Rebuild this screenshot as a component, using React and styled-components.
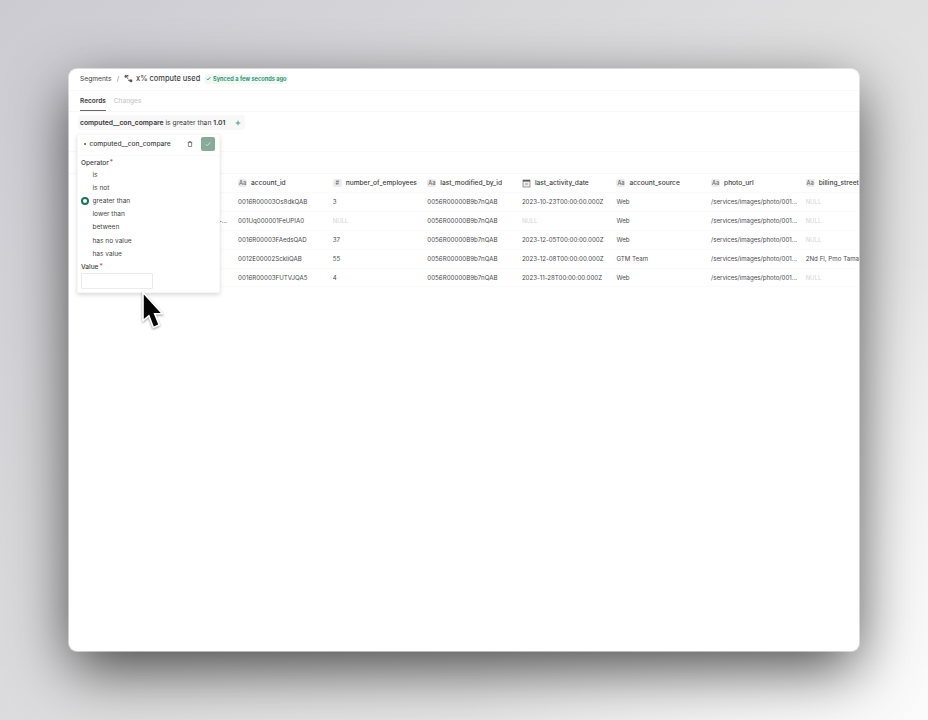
import React from "react";
import styled, { createGlobalStyle } from "styled-components";

const Global = createGlobalStyle`
  * { box-sizing: border-box; }
  body { margin: 0; font-family: Inter, "Liberation Sans", sans-serif; color: #3f3f42; }
`;

const Desktop = styled.main`
  position: relative;
  width: 928px;
  height: 720px;
  overflow: hidden;
  padding: 68px;
  background:
    radial-gradient(ellipse 460px 460px at 100% 100%, #fbfbfb 0%, rgba(251, 251, 251, 0) 100%),
    linear-gradient(135deg, #cccbd2 0%, #dededf 50%, #f0f0f1 100%);
`;

const Window = styled.section`
  position: relative;
  display: flex;
  flex-direction: column;
  width: 792px;
  height: 584px;
  border: 1px solid rgba(255, 255, 255, 0.5);
  border-radius: 9px;
  background: #fff;
  background-clip: padding-box;
  box-shadow: 0 19px 60px -3px rgba(0, 0, 0, 0.7);
`;

const Header = styled.header`
  display: flex;
  align-items: center;
  height: 22px;
  padding: 0 0 2px 11px;
  border-bottom: 1px solid #f8f8f8;
  font-size: 6.65px;
  line-height: 10px;
`;

const Crumb = styled.span`
  width: 32px;
`;
const Slash = styled.span`
  width: 12px;
  text-align: center;
  color: #777;
`;
const Title = styled.h1`
  margin: 0 5px 0 3px;
  width: 64px;
  font-size: 7.45px;
  font-weight: 500;
  white-space: nowrap;
`;
const Synced = styled.span`
  display: flex;
  align-items: center;
  gap: 2px;
  height: 10px;
  width: 83px;
  padding: 0 1px;
  border-radius: 2px;
  background: #effaf5;
  color: #2d8568;
  font-size: 5.7px;
  font-weight: 600;
  white-space: nowrap;
  svg { flex: none; }
`;

const Tabs = styled.nav`
  display: flex;
  gap: 8px;
  height: 21px;
  padding-left: 11px;
  border-bottom: 1px solid #f7f7f7;
`;
const Tab = styled.span`
  height: 20px;
  padding-top: 5px;
  border-bottom: 1px solid ${(p) => (p.$active ? "#666" : "transparent")};
  color: ${(p) => (p.$active ? "#3b3b3e" : "#c9c9ca")};
  font-size: 6.5px;
  font-weight: ${(p) => (p.$active ? 600 : 500)};
  line-height: 10px;
`;

const FilterBar = styled.div`
  height: 40px;
  padding: 3px 0 0 9px;
  border-bottom: 1px solid #f8f8f8;
`;
const Chip = styled.div`
  display: flex;
  align-items: center;
  width: 167px;
  height: 15px;
  padding-left: 2px;
  border-radius: 3px;
  background: #f8f8f8;
  font-size: 6.75px;
  white-space: pre;
  b { font-weight: 600; color: #353538; }
`;
const ChipText = styled.span`
  width: 155px;
`;

const Toolbar = styled.div`
  height: 21px;
`;

const Table = styled.div`
  overflow: hidden;
  padding-left: 74.5px;
  border-top: 1px solid #f7f7f7;
`;
const Row = styled.div`
  display: grid;
  grid-template-columns: 94.6px repeat(7, 94.6px);
  align-items: center;
  height: ${(p) => (p.$head ? "19px" : "18.9px")};
  border-bottom: 1px solid #fafafa;
`;
const HeadCell = styled.div`
  display: flex;
  align-items: center;
  gap: 4px;
  font-size: 6.62px;
  font-weight: 500;
  white-space: nowrap;
`;
const TypeBadge = styled.span`
  display: grid;
  place-items: center;
  width: 9px;
  height: 8px;
  border-radius: 2px;
  background: #ececec;
  color: #666;
  font-size: 5.6px;
`;
const Cell = styled.div`
  color: ${(p) => (p.$empty ? "#d4d4d4" : "#4a4a4d")};
  font-size: ${(p) => (p.$empty ? "5.9px" : "6.15px")};
  letter-spacing: ${(p) => p.$track || "0"};
  white-space: nowrap;
`;
const LeadCell = styled(Cell)`
  padding-right: 11px;
  text-align: right;
`;

const Panel = styled.aside`
  position: absolute;
  top: 65px;
  left: 8px;
  width: 143px;
  height: 159px;
  border: 1px solid #f7f7f7;
  border-radius: 2px;
  background: #fff;
  box-shadow: 0 2px 4px rgba(0, 0, 0, 0.15);
  font-size: 6.55px;
`;
const PanelHead = styled.div`
  display: flex;
  align-items: center;
  height: 21px;
  padding: 0 4px 3px 6px;
  border-bottom: 1px solid #fafafa;
`;
const Dot = styled.i`
  width: 2px;
  height: 2px;
  border-radius: 50%;
  background: #555;
`;
const FieldName = styled.span`
  width: 97px;
  margin-left: 3.5px;
  font-size: 6.65px;
  font-weight: 500;
`;
const Confirm = styled.button`
  display: grid;
  place-items: center;
  width: 14px;
  height: 14px;
  margin: 0 0 0 auto;
  padding: 0;
  border: 0;
  border-radius: 2px;
  background: #88aa9d;
`;
const PanelBody = styled.div`
  padding: 1px 3px 0;
`;
const Label = styled.div`
  height: 12px;
  font-weight: 500;
  line-height: 12px;
  sup { position: relative; top: -1px; margin-left: 1px; color: #dc3e5a; font-size: 6.5px; line-height: 0; vertical-align: baseline; }
`;
const Operators = styled.div`
  display: flex;
  flex-direction: column;
  margin: -1px 0 1px;
`;
const Option = styled.label`
  display: flex;
  align-items: center;
  gap: 3.5px;
  height: 13.2px;
`;
const Radio = styled.i`
  width: 8px;
  height: 8px;
  border: ${(p) => (p.$on ? "2.6px solid #1f7357" : "0")};
  border-radius: 50%;
`;
const ValueInput = styled.input`
  display: block;
  width: 72px;
  height: 16px;
  margin: 0 0 0 -0.5px;
  border: 1px solid #ebebeb;
  border-radius: 1px;
  outline: 0;
`;

const Cursor = styled.svg`
  position: absolute;
  left: 140px;
  top: 289px;
  filter: drop-shadow(0 1px 1px rgba(0, 0, 0, 0.4));
`;

const Check = ({ size, color, weight = 2 }) => (
  <svg width={size} height={size} viewBox="0 0 12 12" fill="none" stroke={color} strokeWidth={weight}>
    <path d="M1.5 6.5 4.5 9.5 10.5 2.5" />
  </svg>
);

const columns = [
  ["text", "account_id"],
  ["number", "number_of_employees"],
  ["text", "last_modified_by_id"],
  ["date", "last_activity_date"],
  ["text", "account_source"],
  ["text", "photo_url"],
  ["text", "billing_street"],
];

const user = "0056R00000B9b7nQAB";
const photo = "/services/images/photo/001…";
const rows = [
  ["", "0016R00003Os8dkQAB", "3", user, "2023-10-23T00:00:00.000Z", "Web", photo, "NULL"],
  ["-…", "001Uq000001FeUPIA0", "NULL", user, "NULL", "Web", photo, "NULL"],
  ["", "0016R00003FAedsQAD", "37", user, "2023-12-05T00:00:00.000Z", "Web", photo, "NULL"],
  ["", "0012E00002SckliQAB", "55", user, "2023-12-08T00:00:00.000Z", "GTM Team", photo, "2Nd Fl, Pmo Taman"],
  ["", "0016R00003FUTVJQA5", "4", user, "2023-11-28T00:00:00.000Z", "Web", photo, "NULL"],
];
const operators = ["is", "is not", "greater than", "lower than", "between", "has no value", "has value"];
const tracking = ["0", "0.02px", "0", "0.03px", "-0.02px", "0", "-0.02px", "0.03px"];

function TypeIcon({ type }) {
  if (type === "date") {
    return (
      <svg width="9" height="9" viewBox="0 0 9 9" fill="none" stroke="#88888b" strokeWidth="0.8">
        <rect x="1" y="1" width="7" height="7" fill="#ededed" />
        <path d="M1 1.8h7" stroke="#555" strokeWidth="1.5" />
        <path d="M3 5h3" />
      </svg>
    );
  }
  return <TypeBadge>{type === "number" ? "#" : "Aa"}</TypeBadge>;
}

export default function App() {
  return (
    <Desktop>
      <Global />
      <Window>
        <Header>
          <Crumb>Segments</Crumb>
          <Slash>/</Slash>
          <svg width="9" height="9" viewBox="0 0 9 9" fill="#59595c">
            <circle cx="1.8" cy="2.4" r="1.3" />
            <rect x="2.9" y="0.9" width="1.6" height="1.6" rx="0.5" />
            <rect x="3" y="3.5" width="1.3" height="1.2" rx="0.4" />
            <rect x="4.3" y="5.6" width="1.5" height="1.5" rx="0.5" />
            <circle cx="6.9" cy="6.7" r="1.5" />
          </svg>
          <Title>x% compute used</Title>
          <Synced>
            <Check size={5} color="#2d8568" />
            Synced a few seconds ago
          </Synced>
        </Header>
        <Tabs>
          <Tab $active>Records</Tab>
          <Tab>Changes</Tab>
        </Tabs>
        <FilterBar>
          <Chip>
            <ChipText><b>computed__con_compare</b> is greater than <b>1.01</b></ChipText>
            <svg width="6" height="6" viewBox="0 0 6 6" stroke="#48a287" strokeWidth="1">
              <path d="M3 .7v4.6M.7 3h4.6" />
            </svg>
          </Chip>
        </FilterBar>
        <Toolbar />
        <Table>
          <Row $head>
            <span />
            {columns.map(([type, name]) => (
              <HeadCell key={name}><TypeIcon type={type} />{name}</HeadCell>
            ))}
          </Row>
          {rows.map(([lead, ...cells], r) => (
            <Row key={r}>
              <LeadCell>{lead}</LeadCell>
              {cells.map((text, c) => (
                <Cell key={c} $empty={text === "NULL"} $track={tracking[c + 1]}>{text}</Cell>
              ))}
            </Row>
          ))}
        </Table>
        <Panel>
          <PanelHead>
            <Dot />
            <FieldName>computed__con_compare</FieldName>
            <svg width="6" height="6" viewBox="0 0 6 7" fill="none" stroke="#555" strokeWidth="0.8">
              <path d="M.4 1.7h5.2M2 1.5V.6h2v.9M1.1 1.8v4.6h3.8V1.8" />
            </svg>
            <Confirm aria-label="Apply"><Check size={6} color="#dcebe4" weight={1.7} /></Confirm>
          </PanelHead>
          <PanelBody>
            <Label>Operator<sup>*</sup></Label>
            <Operators>
              {operators.map((name) => (
                <Option key={name}><Radio $on={name === "greater than"} />{name}</Option>
              ))}
            </Operators>
            <Label>Value<sup>*</sup></Label>
            <ValueInput aria-label="Value" />
          </PanelBody>
        </Panel>
      </Window>
      <Cursor width="28" height="44" viewBox="0 0 28 44">
        <path
          d="M3.8 5.5V30l5.4-4.6 4.6 12 4.4-1.9-4.7-11.6h7.2z"
          fill="#050505"
          stroke="#fff"
          strokeWidth="3.2"
          paintOrder="stroke"
        />
      </Cursor>
    </Desktop>
  );
}
